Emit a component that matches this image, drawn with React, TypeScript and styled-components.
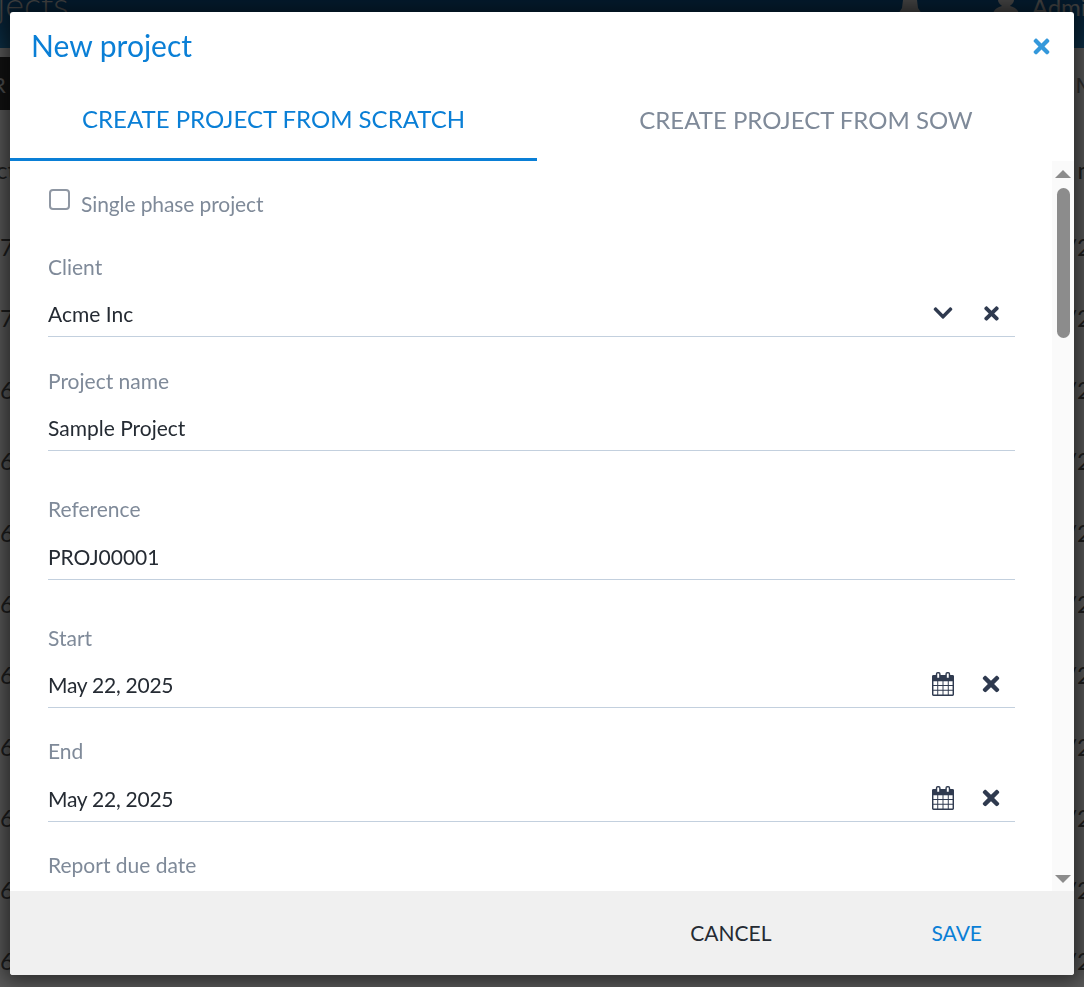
import React from 'react';
import styled, { createGlobalStyle } from 'styled-components';
import { FaChevronDown, FaTimes } from 'react-icons/fa';

const GlobalStyle = createGlobalStyle`
  html, body {
    margin: 0;
    height: 100%;
    overflow: hidden;
    font-family: 'Lato', 'Liberation Sans', sans-serif;
  }
`;

const CalendarIcon = () => (
  <svg width="22" height="24" viewBox="0 0 23 25">
    <path
      fill="#2f3a4f"
      fillRule="evenodd"
      d="M1.5 3H4V2a2 2 0 0 1 2-2h1a2 2 0 0 1 2 2v1h5V2a2 2 0 0 1 2-2h1a2 2 0 0 1 2 2v1h2.500A1.500 1.500 0 0 1 23 4.500v19a1.500 1.500 0 0 1-1.500 1.500h-20A1.500 1.500 0 0 1 0 23.500v-19A1.500 1.500 0 0 1 1.500 3zM5.500 1.500V6h2V1.500zm10 0V6h2V1.500zM1.500 9.500v4h4v-4zm5 0v4h4.500v-4zm5.500 0v4h4.500v-4zm5.500 0v4h4v-4zM1.500 14.500v4h4v-4zm5 0v4h4.500v-4zm5.500 0v4h4.500v-4zm5.500 0v4h4v-4zM1.500 19.500v4h4v-4zm5 0v4h4.500v-4zm5.500 0v4h4.500v-4zm5.500 0v4h4v-4z"
    />
  </svg>
);

const BellIcon = () => (
  <svg width="24" height="14" viewBox="0 0 24 14">
    <path fill="currentColor" d="M5 0h14l1 8 4 6H0l4-6z" />
  </svg>
);

const UserIcon = () => (
  <svg width="26" height="14" viewBox="0 0 26 14">
    <path fill="currentColor" d="M5 0h16c0 3-3 5-4 6 4 1 8 3 9 8H0c1-5 5-7 9-8C8 5 5 3 5 0z" />
  </svg>
);

const fields = [
  { label: 'Client', value: 'Acme Inc', kind: 'select', top: 20.5, gap: 6 },
  { label: 'Project name', value: 'Sample Project', kind: 'text', top: 18.5, gap: 6 },
  { label: 'Reference', value: 'PROJ00001', kind: 'text', top: 32.5, gap: 7 },
  { label: 'Start', value: 'May 22, 2025', kind: 'date', top: 32.5, gap: 6 },
  { label: 'End', value: 'May 22, 2025', kind: 'date', top: 17.5, gap: 7 },
];

const leftRows = ['07', '07', '06', '06', '06', '06', '06', '06', '06', '06', '06'];

export default function App() {
  return (
    <>
      <GlobalStyle />
      <Page>
        <TopBar>
          <PageTitle>Projects</PageTitle>
          <UserArea>
            <BellIcon />
            <UserIcon />
            <UserName>Admin</UserName>
          </UserArea>
        </TopBar>
        <TableHead>
          <FilterButton>R</FilterButton>
          <HeadText>M</HeadText>
        </TableHead>
        <Rows>
          <Row $head>
            <span>ct</span>
            <span>n</span>
          </Row>
          {leftRows.map((row, i) => (
            <Row key={i}>
              <span>{row}</span>
              <span>/2</span>
            </Row>
          ))}
        </Rows>
      </Page>
      <Backdrop>
        <Modal>
          <ModalHeader>
            <ModalTitle>New project</ModalTitle>
            <CloseButton>
              <FaTimes />
            </CloseButton>
          </ModalHeader>
          <Tabs>
            <Tab $active>CREATE PROJECT FROM SCRATCH</Tab>
            <Tab>CREATE PROJECT FROM SOW</Tab>
          </Tabs>
          <BodyWrap>
            <FormBody>
              <CheckRow>
                <CheckBox />
                <CheckLabel>Single phase project</CheckLabel>
              </CheckRow>
              {fields.map((f) => (
                <Field key={f.label} $top={f.top}>
                  <FieldLabel>{f.label}</FieldLabel>
                  <InputRow $gap={f.gap}>
                    <InputValue $date={f.kind === 'date'}>{f.value}</InputValue>
                    {f.kind === 'select' && (
                      <Actions>
                        <ActionIcon>
                          <FaChevronDown size={22} />
                        </ActionIcon>
                        <ActionIcon>
                          <FaTimes size={21} />
                        </ActionIcon>
                      </Actions>
                    )}
                    {f.kind === 'date' && (
                      <Actions>
                        <ActionIcon>
                          <CalendarIcon />
                        </ActionIcon>
                        <ActionIcon>
                          <FaTimes size={24} />
                        </ActionIcon>
                      </Actions>
                    )}
                  </InputRow>
                </Field>
              ))}
              <Field $top={17.5}>
                <FieldLabel>Report due date</FieldLabel>
              </Field>
            </FormBody>
            <Scrollbar>
              <ArrowUp />
              <ScrollTrack>
                <ScrollThumb />
              </ScrollTrack>
              <ArrowDown />
            </Scrollbar>
          </BodyWrap>
          <ModalFooter>
            <FooterButton>CANCEL</FooterButton>
            <FooterButton $primary>SAVE</FooterButton>
          </ModalFooter>
        </Modal>
      </Backdrop>
    </>
  );
}

const Page = styled.div`
  width: 1084px;
  height: 987px;
  overflow: hidden;
  background: #ffffff;
  display: flex;
  flex-direction: column;
`;

const TopBar = styled.div`
  height: 48px;
  flex: none;
  display: flex;
  justify-content: space-between;
  align-items: flex-start;
  background: linear-gradient(#0a4f88, #2285c4);
  color: #c4c4c4;
`;

const PageTitle = styled.div`
  font-size: 36px;
  font-weight: 300;
  line-height: 20px;
  margin: -6px 0 0 -55px;
`;

const UserArea = styled.div`
  display: flex;
  align-items: flex-start;
  gap: 71px;
  margin-right: -16px;
`;

const UserName = styled.div`
  font-size: 24px;
  line-height: 14px;
  margin-left: -58px;
`;

const TableHead = styled.div`
  height: 53px;
  margin-top: 9px;
  flex: none;
  display: flex;
  justify-content: space-between;
`;

const FilterButton = styled.div`
  width: 30px;
  background: #333333;
  color: #dddddd;
  font-size: 22px;
  line-height: 56px;
  text-indent: -8px;
`;

const HeadText = styled.div`
  color: #888888;
  font-size: 22px;
  line-height: 56px;
  margin-right: -12px;
`;

const Rows = styled.div`
  display: flex;
  flex-direction: column;
  padding-top: 45px;
`;

const Row = styled.div<{ $head?: boolean }>`
  height: ${(p) => (p.$head ? 77 : 71.4)}px;
  flex: none;
  display: flex;
  justify-content: space-between;
  color: #555555;
  font-size: 24px;
  margin: 0 -7px 0 ${(p) => (p.$head ? -4 : -14)}px;
`;

const Backdrop = styled.div`
  position: fixed;
  inset: 0;
  background: rgba(0, 0, 0, 0.65);
  padding: 12px 10px;
  box-sizing: border-box;
`;

const Modal = styled.div`
  height: 963px;
  display: flex;
  flex-direction: column;
  background: #ffffff;
  border-radius: 3px;
  box-shadow: 0 0 20px 6px rgba(0, 0, 0, 0.55);
  overflow: hidden;
`;

const ModalHeader = styled.div`
  height: 66px;
  flex: none;
  display: flex;
  justify-content: space-between;
  align-items: center;
  padding: 0 21px;
  box-sizing: border-box;
`;

const ModalTitle = styled.div`
  font-size: 30px;
  color: #0a7fd6;
`;

const CloseButton = styled.div`
  color: #3498db;
  font-size: 23px;
  display: flex;
  margin-top: 2px;
`;

const Tabs = styled.div`
  height: 83px;
  flex: none;
  display: flex;
`;

const Tab = styled.div<{ $active?: boolean }>`
  width: 527px;
  flex: ${(p) => (p.$active ? 'none' : 1)};
  box-sizing: border-box;
  text-align: center;
  font-size: 24px;
  line-height: ${(p) => (p.$active ? 82 : 84)}px;
  padding-left: ${(p) => (p.$active ? 0 : 1)}px;
  color: ${(p) => (p.$active ? '#0a7fd6' : '#7f8a99')};
  border-bottom: 3px solid ${(p) => (p.$active ? '#0a7fd6' : 'transparent')};
`;

const BodyWrap = styled.div`
  flex: 1;
  min-height: 0;
  display: flex;
`;

const FormBody = styled.div`
  flex: 1;
  overflow: hidden;
  padding: 26px 37px 0 38px;
`;

const CheckRow = styled.div`
  display: flex;
  align-items: flex-start;
  gap: 11px;
`;

const CheckBox = styled.div`
  width: 17px;
  height: 17px;
  margin: 2px 0 0 1px;
  border: 2px solid #8f97a3;
  border-radius: 4px;
  background: #ffffff;
`;

const CheckLabel = styled.div`
  font-size: 21px;
  line-height: 34px;
  letter-spacing: -0.1px;
  color: #7f8a99;
`;

const Field = styled.div<{ $top: number }>`
  margin-top: ${(p) => p.$top}px;
`;

const FieldLabel = styled.div`
  font-size: 21px;
  line-height: 30px;
  color: #7f8a99;
  padding-top: 10px;
`;

const InputRow = styled.div<{ $gap: number }>`
  height: 49.5px;
  margin-top: ${(p) => p.$gap}px;
  padding-top: 3px;
  box-sizing: border-box;
  display: flex;
  align-items: center;
  justify-content: space-between;
  border-bottom: 1px solid #c3d0de;
`;

const InputValue = styled.div<{ $date?: boolean }>`
  font-size: 21px;
  letter-spacing: ${(p) => (p.$date ? '-0.25px' : 'normal')};
  color: #252b33;
`;

const Actions = styled.div`
  display: flex;
  align-items: center;
`;

const ActionIcon = styled.div`
  width: 48px;
  display: flex;
  justify-content: center;
  color: #2f3a4f;
`;

const Scrollbar = styled.div`
  width: 22px;
  flex: none;
  background: #fafafa;
  display: flex;
  flex-direction: column;
  align-items: center;
  padding-top: 9px;
  box-sizing: border-box;
`;

const ArrowUp = styled.div`
  width: 0;
  height: 0;
  border-left: 8px solid transparent;
  border-right: 8px solid transparent;
  border-bottom: 8px solid #8c8c8c;
`;

const ArrowDown = styled.div`
  width: 0;
  height: 0;
  margin-bottom: 8px;
  border-left: 8px solid transparent;
  border-right: 8px solid transparent;
  border-top: 8px solid #8c8c8c;
`;

const ScrollTrack = styled.div`
  flex: 1;
  width: 100%;
  padding-top: 10px;
  display: flex;
  justify-content: center;
`;

const ScrollThumb = styled.div`
  width: 13px;
  height: 150px;
  border-radius: 7px;
  background: #8c8c8c;
`;

const ModalFooter = styled.div`
  height: 84px;
  flex: none;
  background: #f0f0f0;
  display: flex;
  justify-content: flex-end;
  align-items: center;
  padding: 0 92px 2px 0;
  box-sizing: border-box;
  gap: 160px;
`;

const FooterButton = styled.div<{ $primary?: boolean }>`
  font-size: 21px;
  color: ${(p) => (p.$primary ? '#0a7fd6' : '#252b33')};
`;
